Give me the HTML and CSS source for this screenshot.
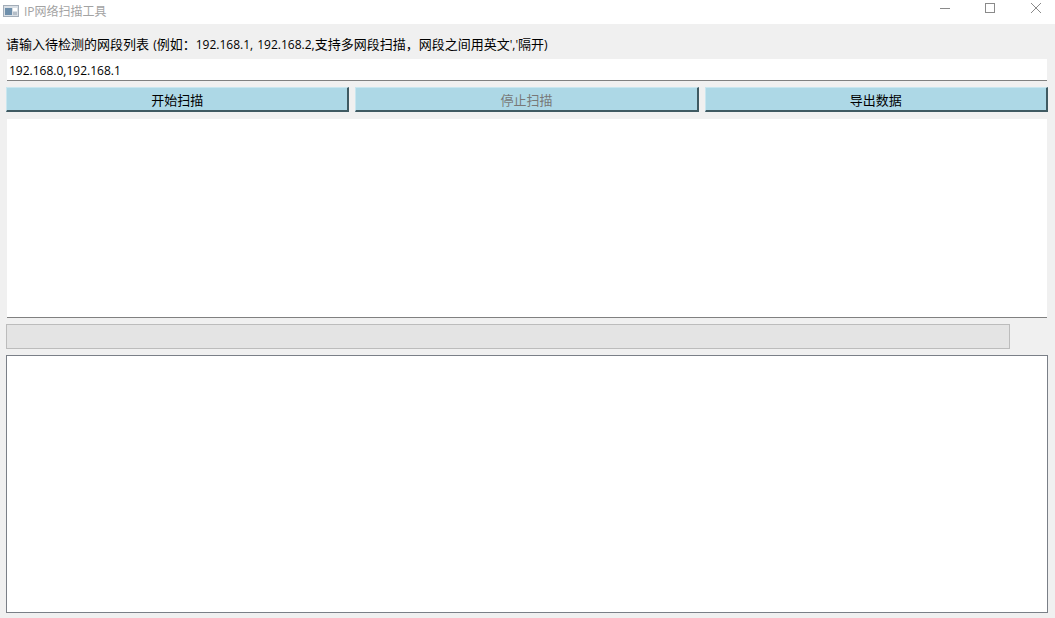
FILE: index.html
```html
<!DOCTYPE html>
<html lang="zh-CN">
<head>
<meta charset="utf-8">
<title>IP网络扫描工具</title>
<link rel="stylesheet" href="styles.css">
</head>
<body>
<header class="titlebar">
  <div class="title-left">
    <svg class="app-icon" width="16" height="12" viewBox="0 0 16 12">
      <rect x="0.5" y="0.5" width="15" height="11" fill="#d9dfe5" stroke="#a3adb8"/>
      <rect x="2" y="3" width="7" height="7" fill="#6e8fab"/>
      <rect x="10" y="3" width="4" height="3" fill="#fff"/>
      <rect x="10" y="7" width="4" height="3" fill="#b5bec8"/>
    </svg>
    <span class="title-text">IP网络扫描工具</span>
  </div>
  <div class="win-controls">
    <svg class="win-btn" width="46" height="16" viewBox="0 0 46 16"><path d="M18 8.5H28" stroke="#8a8a8a" fill="none"/></svg>
    <svg class="win-btn" width="46" height="16" viewBox="0 0 46 16"><rect x="17.5" y="3.5" width="9" height="9" stroke="#8a8a8a" fill="none"/></svg>
    <svg class="win-btn" width="46" height="16" viewBox="0 0 46 16"><path d="M17 3L27 13M27 3L17 13" stroke="#8a8a8a" fill="none"/></svg>
  </div>
</header>
<main class="content">
  <label class="prompt"><span class="cjk">请输入待检测的网段列表</span> (<span class="cjk">例如：</span>192.168.1, 192.168.2,<span class="cjk">支持多网段扫描，网段之间用英文</span>','<span class="cjk">隔开</span>)</label>
  <div class="ip-input">192.168.0,192.168.1</div>
  <div class="actions">
    <button class="btn">开始扫描</button>
    <button class="btn" disabled>停止扫描</button>
    <button class="btn">导出数据</button>
  </div>
  <div class="results"></div>
  <div class="progress-row"><div class="progress"></div></div>
  <div class="log"></div>
</main>
</body>
</html>
```
FILE: styles.css
```css
* { box-sizing: border-box; }
html, body { margin: 0; height: 618px; overflow: hidden; }
body {
  width: 1055px;
  background: #f0f0f0;
  font-family: "Open Sans", "Noto Sans CJK SC", sans-serif;
  font-size: 12px;
  color: #000;
}
.cjk { font-size: 13px; }
.titlebar {
  height: 24px;
  background: #fff;
  display: flex;
  justify-content: space-between;
  align-items: center;
}
.title-left { display: flex; align-items: center; padding-left: 3px; gap: 5px; }
.app-icon { display: block; margin-top: -3px; }
.title-text { color: #a3a3a3; font-size: 12px; margin-top: -3px; }
.win-controls { display: flex; margin-right: -5px; margin-top: -8px; }
.win-btn { display: block; }
.content { padding: 0 7px 5px 6px; }
.prompt { display: block; height: 35px; line-height: 41px; white-space: nowrap; word-spacing: 1px; }
.ip-input {
  margin: 0 1px;
  height: 22px;
  background: #fff;
  border-bottom: 1px solid #808080;
  line-height: 23px;
  padding-left: 2px;
}
.actions { display: flex; gap: 6px; margin-top: 6px; }
.btn {
  flex: 1;
  height: 25px;
  padding: 0;
  font-family: inherit;
  font-size: 13px;
  background: #add8e6;
  color: #000;
  border: 0;
  border-top: 1px solid #c9e6ef;
  border-left: 1px solid #c9e6ef;
  border-right: 2px solid #3f5a62;
  border-bottom: 2px solid #3f5a62;
}
.btn:disabled { color: #787878; }
.results {
  margin: 7px 1px 0;
  height: 199px;
  background: #fff;
  border-bottom: 1px solid #808080;
}
.progress-row { margin-top: 6px; padding-right: 38px; }
.progress { height: 25px; background: #e4e4e4; border: 1px solid #bcbcbc; }
.log {
  margin-top: 6px;
  height: 258px;
  background: #fff;
  border: 1px solid #7a7f87;
}
```
